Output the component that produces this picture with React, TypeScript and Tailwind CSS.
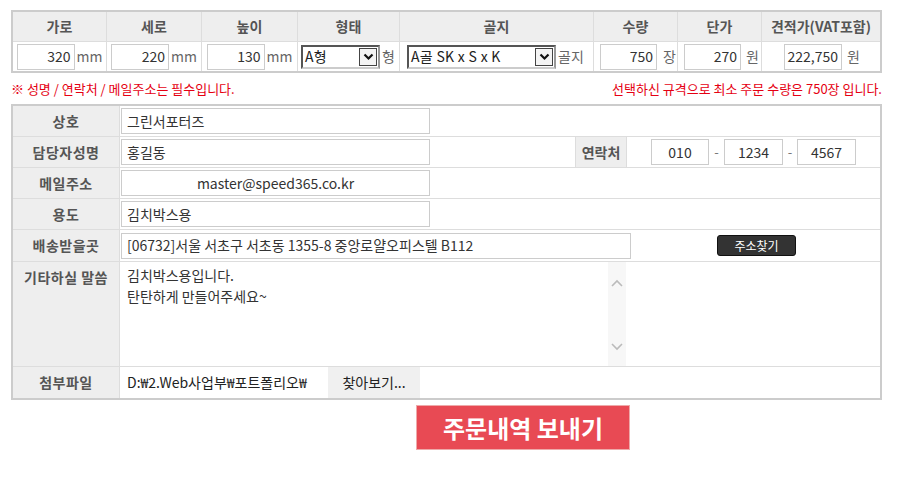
import type { ReactNode } from 'react'

const font = { fontFamily: '"Noto Sans CJK KR", "Noto Sans", sans-serif' }

function Box({ value, w, align = 'right' }: { value: string; w: number; align?: 'right' | 'left' | 'center' }) {
  const a = align === 'right' ? 'justify-end pr-[3px]' : align === 'center' ? 'justify-center' : 'justify-start pl-[5px]'
  return (
    <div style={{ width: w }} className={`h-[26px] bg-white border border-[#ccc] flex items-center text-[14px] text-[#333] whitespace-nowrap overflow-hidden ${a}`}>
      {value}
    </div>
  )
}

function Select({ value, w }: { value: string; w: number }) {
  return (
    <div style={{ width: w }} className="h-[24px] bg-white border-2 border-t-[#555] border-l-[#555] border-r-[#999] border-b-[#ccc] flex items-center justify-between text-[14px] text-[#222]">
      <span className="pl-[2px] whitespace-nowrap tracking-[0.3px]">{value}</span>
      <span className="w-[18px] h-[18px] mr-[1px] border border-[#444] bg-[#f4f4f4] flex items-center justify-center">
        <svg width="11" height="8" viewBox="0 0 11 8"><path d="M1.5 1.5 L5.5 5.5 L9.5 1.5" fill="none" stroke="#111" strokeWidth="2.2" /></svg>
      </span>
    </div>
  )
}

function Unit({ children }: { children: ReactNode }) {
  return <span className="text-[14px] text-[#666]">{children}</span>
}

function Row({ label, h, children }: { label: string; h: number; children: ReactNode }) {
  return (
    <div style={{ height: h }} className="flex border-b border-[#ddd] last:border-b-0">
      <div className="w-[107px] shrink-0 bg-[#eee] border-r border-[#ddd] flex items-center justify-center text-[14px] font-bold text-[#555] tracking-[0.5px]">
        {label}
      </div>
      <div className="flex-1 bg-white pl-px flex items-center">{children}</div>
    </div>
  )
}

export default function App() {
  const heads = ['가로', '세로', '높이', '형태', '골지', '수량', '단가', '견적가(VAT포함)']
  return (
    <div style={font} className="w-[910px] h-[489px] bg-white pt-[10px] pl-[11px]">
      {/* 규격 / 견적 */}
      <div className="w-[871px] border-2 border-[#ccc]">
        <div className="grid grid-cols-[93px_94px_95px_101px_193px_83px_83px_118px] gap-px bg-[#ddd]">
          {heads.map(h => (
            <div key={h} className="h-[29px] bg-[#eee] flex items-center justify-center text-[14px] font-bold text-[#555]">{h}</div>
          ))}
          <div className="h-[29px] bg-white flex items-center justify-center gap-[2px]"><Box value="320" w={58} /><Unit>mm</Unit></div>
          <div className="h-[29px] bg-white flex items-center justify-center gap-[2px]"><Box value="220" w={58} /><Unit>mm</Unit></div>
          <div className="h-[29px] bg-white flex items-center justify-center gap-[2px]"><Box value="130" w={58} /><Unit>mm</Unit></div>
          <div className="h-[29px] bg-white flex items-center pl-[3px] gap-[2px]"><Select value="A형" w={79} /><Unit>형</Unit></div>
          <div className="h-[29px] bg-white flex items-center pl-[7px] gap-[2px]"><Select value="A골 SK x S x K" w={149} /><Unit>골지</Unit></div>
          <div className="h-[29px] bg-white flex items-center pl-[6px] gap-[6px]"><Box value="750" w={57} /><Unit>장</Unit></div>
          <div className="h-[29px] bg-white flex items-center pl-[6px] gap-[5px]"><Box value="270" w={57} /><Unit>원</Unit></div>
          <div className="h-[29px] bg-white flex items-center pl-[22px] gap-[5px]"><Box value="222,750" w={58} /><Unit>원</Unit></div>
        </div>
      </div>

      <div className="w-[871px] mt-[8px] h-[16px] flex items-center justify-between text-[13px] text-[#e50012]">
        <span>※ 성명 / 연락처 / 메일주소는 필수입니다.</span>
        <span>선택하신 규격으로 최소 주문 수량은 750장 입니다.</span>
      </div>

      {/* 주문자 정보 */}
      <div className="w-[871px] mt-[7px] border-2 border-[#ccc]">
        <Row label="상호" h={31}><Box value="그린서포터즈" w={309} align="left" /></Row>
        <Row label="담당자성명" h={31}>
          <Box value="홍길동" w={309} align="left" />
          <div className="ml-[145px] w-[52px] self-stretch bg-[#eee] border-x border-[#ddd] flex items-center justify-center text-[14px] font-bold text-[#555]">연락처</div>
          <div className="ml-[24px]"><Box value="010" w={58} align="center" /></div>
          <span className="w-[15px] text-center text-[13px] text-[#777]">-</span>
          <Box value="1234" w={59} align="center" />
          <span className="w-[14px] text-center text-[13px] text-[#777]">-</span>
          <Box value="4567" w={59} align="center" />
        </Row>
        <Row label="메일주소" h={31}><Box value="master@speed365.co.kr" w={309} align="center" /></Row>
        <Row label="용도" h={31}><Box value="김치박스용" w={309} align="left" /></Row>
        <Row label="배송받을곳" h={32}>
          <Box value="[06732]서울 서초구 서초동 1355-8 중앙로얄오피스텔 B112" w={510} align="left" />
          <button className="ml-[86px] w-[79px] h-[21px] bg-[#333] border border-[#111] rounded-[3px] text-[12px] text-white leading-none">주소찾기</button>
        </Row>
        <div className="h-[105px] flex border-b border-[#ddd]">
          <div className="w-[107px] shrink-0 bg-[#eee] border-r border-[#ddd] pt-[5px] text-center text-[14px] font-bold text-[#555] tracking-[0.5px]">기타하실 말씀</div>
          <div className="flex-1 bg-white pl-px flex">
            <div className="w-[487px] pl-[6px] pt-[3px] text-[14px] leading-[21px] text-[#333]">
              <div>김치박스용입니다.</div>
              <div>탄탄하게 만들어주세요~</div>
            </div>
            <div className="w-[18px] bg-[#f7f7f7] flex flex-col items-center pt-[17px] pb-[15px] justify-between">
              <svg width="12" height="8" viewBox="0 0 12 8"><path d="M1 7 L6 2 L11 7" fill="none" stroke="#bbb" strokeWidth="1.6" /></svg>
              <svg width="12" height="8" viewBox="0 0 12 8"><path d="M1 1 L6 6 L11 1" fill="none" stroke="#bbb" strokeWidth="1.6" /></svg>
            </div>
          </div>
        </div>
        <Row label="첨부파일" h={31}>
          <div className="self-stretch w-[203px] bg-white flex items-center pl-[6px] text-[14px] text-[#222] whitespace-nowrap overflow-hidden">D:₩2.Web사업부₩포트폴리오₩</div>
          <div className="self-stretch ml-[4px] w-[92px] bg-[#f0f0f0] flex items-center justify-center text-[14px] text-[#222]">찾아보기...</div>
        </Row>
      </div>

      <button className="mt-[5px] ml-[405px] w-[214px] h-[45px] bg-[#e84a54] border border-[#eaa] text-white text-[24px] font-bold">
        주문내역 보내기
      </button>
    </div>
  )
}
